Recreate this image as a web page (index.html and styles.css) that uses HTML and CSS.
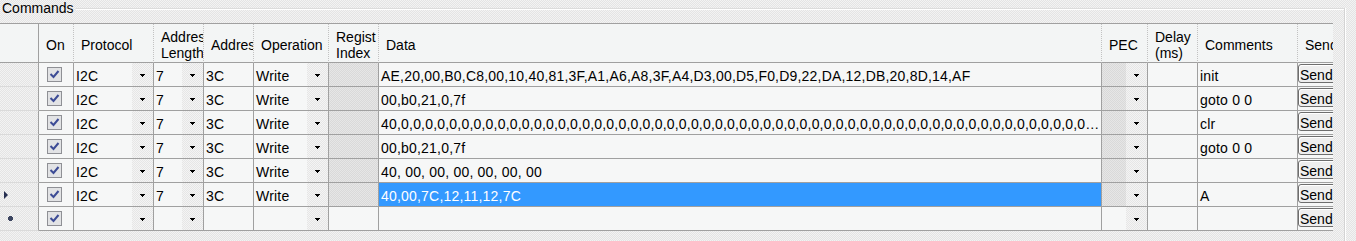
FILE: index.html
```html
<!DOCTYPE html>
<html lang="en">
<head>
    <meta charset="UTF-8">
    <meta name="viewport" content="width=device-width, initial-scale=1.0">
    <title>Commands</title>
    <link rel="stylesheet" href="styles.css">
</head>
<body>
<div class="groupbox">
    <div class="group-title">Commands</div>
    <div class="grid">
        <!-- header row -->
        <div class="hd corner"></div>
        <div class="hd">On</div>
        <div class="hd">Protocol</div>
        <div class="hd">Address<br>Length</div>
        <div class="hd">Address</div>
        <div class="hd">Operation</div>
        <div class="hd">Regist<br>Index</div>
        <div class="hd">Data</div>
        <div class="hd">PEC</div>
        <div class="hd">Delay<br>(ms)</div>
        <div class="hd">Comments</div>
        <div class="hd">Send</div>

        <!-- row 1 -->
        <div class="rh"></div>
        <div class="c chk"><svg class="cb" width="15" height="15" viewBox="0 0 15 15"><rect x="0.5" y="0.5" width="14" height="14" fill="#e2e3e5" stroke="#8f9095"/><path d="M3.5 7l3 3l5-6" fill="none" stroke="#3d4c96" stroke-width="2"/></svg></div>
        <div class="c"><span class="t">I2C</span><span class="dd"><svg width="5" height="3"><path d="M0 0h5v1h-5zM1 1h3v1h-3zM2 2h1v1h-1z"/></svg></span></div>
        <div class="c"><span class="t">7</span><span class="dd"><svg width="5" height="3"><path d="M0 0h5v1h-5zM1 1h3v1h-3zM2 2h1v1h-1z"/></svg></span></div>
        <div class="c"><span class="t">3C</span></div>
        <div class="c"><span class="t">Write</span><span class="dd"><svg width="5" height="3"><path d="M0 0h5v1h-5zM1 1h3v1h-3zM2 2h1v1h-1z"/></svg></span></div>
        <div class="c reg"></div>
        <div class="c"><span class="t">AE,20,00,B0,C8,00,10,40,81,3F,A1,A6,A8,3F,A4,D3,00,D5,F0,D9,22,DA,12,DB,20,8D,14,AF</span></div>
        <div class="c pec"><span class="t"></span><span class="dd"><svg width="5" height="3"><path d="M0 0h5v1h-5zM1 1h3v1h-3zM2 2h1v1h-1z"/></svg></span></div>
        <div class="c"><span class="t"></span></div>
        <div class="c"><span class="t">init</span></div>
        <div class="c send"><button class="send-btn">Send</button></div>

        <!-- row 2 -->
        <div class="rh"></div>
        <div class="c chk"><svg class="cb" width="15" height="15" viewBox="0 0 15 15"><rect x="0.5" y="0.5" width="14" height="14" fill="#e2e3e5" stroke="#8f9095"/><path d="M3.5 7l3 3l5-6" fill="none" stroke="#3d4c96" stroke-width="2"/></svg></div>
        <div class="c"><span class="t">I2C</span><span class="dd"><svg width="5" height="3"><path d="M0 0h5v1h-5zM1 1h3v1h-3zM2 2h1v1h-1z"/></svg></span></div>
        <div class="c"><span class="t">7</span><span class="dd"><svg width="5" height="3"><path d="M0 0h5v1h-5zM1 1h3v1h-3zM2 2h1v1h-1z"/></svg></span></div>
        <div class="c"><span class="t">3C</span></div>
        <div class="c"><span class="t">Write</span><span class="dd"><svg width="5" height="3"><path d="M0 0h5v1h-5zM1 1h3v1h-3zM2 2h1v1h-1z"/></svg></span></div>
        <div class="c reg"></div>
        <div class="c"><span class="t">00,b0,21,0,7f</span></div>
        <div class="c pec"><span class="t"></span><span class="dd"><svg width="5" height="3"><path d="M0 0h5v1h-5zM1 1h3v1h-3zM2 2h1v1h-1z"/></svg></span></div>
        <div class="c"><span class="t"></span></div>
        <div class="c"><span class="t">goto 0 0</span></div>
        <div class="c send"><button class="send-btn">Send</button></div>

        <!-- row 3 -->
        <div class="rh"></div>
        <div class="c chk"><svg class="cb" width="15" height="15" viewBox="0 0 15 15"><rect x="0.5" y="0.5" width="14" height="14" fill="#e2e3e5" stroke="#8f9095"/><path d="M3.5 7l3 3l5-6" fill="none" stroke="#3d4c96" stroke-width="2"/></svg></div>
        <div class="c"><span class="t">I2C</span><span class="dd"><svg width="5" height="3"><path d="M0 0h5v1h-5zM1 1h3v1h-3zM2 2h1v1h-1z"/></svg></span></div>
        <div class="c"><span class="t">7</span><span class="dd"><svg width="5" height="3"><path d="M0 0h5v1h-5zM1 1h3v1h-3zM2 2h1v1h-1z"/></svg></span></div>
        <div class="c"><span class="t">3C</span></div>
        <div class="c"><span class="t">Write</span><span class="dd"><svg width="5" height="3"><path d="M0 0h5v1h-5zM1 1h3v1h-3zM2 2h1v1h-1z"/></svg></span></div>
        <div class="c reg"></div>
        <div class="c"><span class="t">40,0,0,0,0,0,0,0,0,0,0,0,0,0,0,0,0,0,0,0,0,0,0,0,0,0,0,0,0,0,0,0,0,0,0,0,0,0,0,0,0,0,0,0,0,0,0,0,0,0,0,0,0,0,0,0,0,0,0,0,0,0,0,0,0,0,0,0,0,0,0,0,0,0,0,0,0,0,0,0,0,0,0,0,0,0,0,0,0,0,0,0,0,0,0,0,0,0,0,0,0,0,0,0,0,0,0,0,0,0,0,0,0,0,0,0,0,0,0,0,0,0,0,0,0,0,0,0,0</span></div>
        <div class="c pec"><span class="t"></span><span class="dd"><svg width="5" height="3"><path d="M0 0h5v1h-5zM1 1h3v1h-3zM2 2h1v1h-1z"/></svg></span></div>
        <div class="c"><span class="t"></span></div>
        <div class="c"><span class="t">clr</span></div>
        <div class="c send"><button class="send-btn">Send</button></div>

        <!-- row 4 -->
        <div class="rh"></div>
        <div class="c chk"><svg class="cb" width="15" height="15" viewBox="0 0 15 15"><rect x="0.5" y="0.5" width="14" height="14" fill="#e2e3e5" stroke="#8f9095"/><path d="M3.5 7l3 3l5-6" fill="none" stroke="#3d4c96" stroke-width="2"/></svg></div>
        <div class="c"><span class="t">I2C</span><span class="dd"><svg width="5" height="3"><path d="M0 0h5v1h-5zM1 1h3v1h-3zM2 2h1v1h-1z"/></svg></span></div>
        <div class="c"><span class="t">7</span><span class="dd"><svg width="5" height="3"><path d="M0 0h5v1h-5zM1 1h3v1h-3zM2 2h1v1h-1z"/></svg></span></div>
        <div class="c"><span class="t">3C</span></div>
        <div class="c"><span class="t">Write</span><span class="dd"><svg width="5" height="3"><path d="M0 0h5v1h-5zM1 1h3v1h-3zM2 2h1v1h-1z"/></svg></span></div>
        <div class="c reg"></div>
        <div class="c"><span class="t">00,b0,21,0,7f</span></div>
        <div class="c pec"><span class="t"></span><span class="dd"><svg width="5" height="3"><path d="M0 0h5v1h-5zM1 1h3v1h-3zM2 2h1v1h-1z"/></svg></span></div>
        <div class="c"><span class="t"></span></div>
        <div class="c"><span class="t">goto 0 0</span></div>
        <div class="c send"><button class="send-btn">Send</button></div>

        <!-- row 5 -->
        <div class="rh"></div>
        <div class="c chk"><svg class="cb" width="15" height="15" viewBox="0 0 15 15"><rect x="0.5" y="0.5" width="14" height="14" fill="#e2e3e5" stroke="#8f9095"/><path d="M3.5 7l3 3l5-6" fill="none" stroke="#3d4c96" stroke-width="2"/></svg></div>
        <div class="c"><span class="t">I2C</span><span class="dd"><svg width="5" height="3"><path d="M0 0h5v1h-5zM1 1h3v1h-3zM2 2h1v1h-1z"/></svg></span></div>
        <div class="c"><span class="t">7</span><span class="dd"><svg width="5" height="3"><path d="M0 0h5v1h-5zM1 1h3v1h-3zM2 2h1v1h-1z"/></svg></span></div>
        <div class="c"><span class="t">3C</span></div>
        <div class="c"><span class="t">Write</span><span class="dd"><svg width="5" height="3"><path d="M0 0h5v1h-5zM1 1h3v1h-3zM2 2h1v1h-1z"/></svg></span></div>
        <div class="c reg"></div>
        <div class="c"><span class="t">40, 00, 00, 00, 00, 00, 00</span></div>
        <div class="c pec"><span class="t"></span><span class="dd"><svg width="5" height="3"><path d="M0 0h5v1h-5zM1 1h3v1h-3zM2 2h1v1h-1z"/></svg></span></div>
        <div class="c"><span class="t"></span></div>
        <div class="c"><span class="t"></span></div>
        <div class="c send"><button class="send-btn">Send</button></div>

        <!-- row 6 (current) -->
        <div class="rh"><svg class="cur" width="4" height="8"><path d="M0 0L4 4L0 8z" fill="#262f50"/></svg></div>
        <div class="c chk"><svg class="cb" width="15" height="15" viewBox="0 0 15 15"><rect x="0.5" y="0.5" width="14" height="14" fill="#e2e3e5" stroke="#8f9095"/><path d="M3.5 7l3 3l5-6" fill="none" stroke="#3d4c96" stroke-width="2"/></svg></div>
        <div class="c"><span class="t">I2C</span><span class="dd"><svg width="5" height="3"><path d="M0 0h5v1h-5zM1 1h3v1h-3zM2 2h1v1h-1z"/></svg></span></div>
        <div class="c"><span class="t">7</span><span class="dd"><svg width="5" height="3"><path d="M0 0h5v1h-5zM1 1h3v1h-3zM2 2h1v1h-1z"/></svg></span></div>
        <div class="c"><span class="t">3C</span></div>
        <div class="c"><span class="t">Write</span><span class="dd"><svg width="5" height="3"><path d="M0 0h5v1h-5zM1 1h3v1h-3zM2 2h1v1h-1z"/></svg></span></div>
        <div class="c reg"></div>
        <div class="c sel"><span class="t">40,00,7C,12,11,12,7C</span></div>
        <div class="c pec"><span class="t"></span><span class="dd"><svg width="5" height="3"><path d="M0 0h5v1h-5zM1 1h3v1h-3zM2 2h1v1h-1z"/></svg></span></div>
        <div class="c"><span class="t"></span></div>
        <div class="c"><span class="t">A</span></div>
        <div class="c send"><button class="send-btn">Send</button></div>

        <!-- row 7 (new row) -->
        <div class="rh"><svg class="newrow" width="5" height="5"><path d="M1 0h3v1h1v3h-1v1h-3v-1h-1v-3h1z" fill="#3c4560"/></svg></div>
        <div class="c chk"><svg class="cb" width="15" height="15" viewBox="0 0 15 15"><rect x="0.5" y="0.5" width="14" height="14" fill="#e2e3e5" stroke="#8f9095"/><path d="M3.5 7l3 3l5-6" fill="none" stroke="#3d4c96" stroke-width="2"/></svg></div>
        <div class="c"><span class="t"></span><span class="dd"><svg width="5" height="3"><path d="M0 0h5v1h-5zM1 1h3v1h-3zM2 2h1v1h-1z"/></svg></span></div>
        <div class="c"><span class="t"></span><span class="dd"><svg width="5" height="3"><path d="M0 0h5v1h-5zM1 1h3v1h-3zM2 2h1v1h-1z"/></svg></span></div>
        <div class="c"><span class="t"></span></div>
        <div class="c"><span class="t"></span><span class="dd"><svg width="5" height="3"><path d="M0 0h5v1h-5zM1 1h3v1h-3zM2 2h1v1h-1z"/></svg></span></div>
        <div class="c"></div>
        <div class="c"><span class="t"></span></div>
        <div class="c"><span class="t"></span><span class="dd"><svg width="5" height="3"><path d="M0 0h5v1h-5zM1 1h3v1h-3zM2 2h1v1h-1z"/></svg></span></div>
        <div class="c"><span class="t"></span></div>
        <div class="c"><span class="t"></span></div>
        <div class="c send"><button class="send-btn">Send</button></div>
    </div>
</div>
</body>
</html>
```

FILE: styles.css
```css
body {
    margin: 0;
    height: 241px;
    overflow: hidden;
    font-family: "Liberation Sans", Arial, sans-serif;
    font-size: 14px;
    color: #000;
    background: repeating-conic-gradient(#e4e4e4 0 25%, #f3f3f3 0 50%) 0 0 / 2px 2px;
}

/* group box round the grid */
.groupbox {
    width: 1344px;
    height: 240px;
    margin-top: 8px;
    border-top: 1px solid #dcdcdc;
    border-right: 1px solid #d4d4d4;
    box-shadow: inset 0 1px 0 #fff, 1px 0 0 #fff;
}

.group-title {
    width: fit-content;
    height: 15px;
    margin-top: -9px;
    padding: 0 2px;
    line-height: 17px;
    background: repeating-conic-gradient(#e4e4e4 0 25%, #f3f3f3 0 50%) 0 0 / 2px 2px fixed;
}

.grid {
    width: 1333px;
    margin-top: 8px;
    overflow: hidden;
    display: grid;
    grid-template-columns: 39px 35px 80px 50px 50px 75px 50px 723px 46px 50px 100px 80px;
    grid-template-rows: 39px repeat(7, 24px);
    border-top: 1px solid #a0a0a0;
}

.grid > div {
    box-sizing: border-box;
    min-width: 0;
}

/* column headers */
.hd {
    display: flex;
    align-items: center;
    padding: 4px 0 0 7px;
    line-height: 16px;
    white-space: nowrap;
    overflow: hidden;
    background: #f3f5f5;
    border-right: 1px dotted #c2c2c2;
    border-bottom: 1px solid #a0a0a0;
}

.hd.corner {
    border-right: 1px solid #a0a0a0;
}

/* row headers */
.rh {
    display: flex;
    align-items: center;
    border-right: 1px solid #a0a0a0;
    border-bottom: 1px solid #dadada;
}

.rh .cur {
    margin-left: 4px;
}

.rh .newrow {
    margin-left: 8px;
}

/* body cells */
.c {
    display: flex;
    overflow: hidden;
    white-space: nowrap;
    background: #f6f7f7;
    border-right: 1px solid #a0a0a0;
    border-bottom: 1px solid #a0a0a0;
}

.t {
    flex: 1;
    min-width: 0;
    padding: 3px 0 0 2px;
    line-height: 20px;
    letter-spacing: 0.2px;
    overflow: hidden;
    text-overflow: ellipsis;
}

.chk {
    align-items: center;
    justify-content: center;
}

.cb {
    margin-right: 3px;
}

/* combo box drop button */
.dd {
    width: 21px;
    flex: none;
    display: flex;
    align-items: center;
    justify-content: center;
    background: repeating-conic-gradient(#e6e6e6 0 25%, #f4f4f4 0 50%) 0 0 / 2px 2px;
}

.dd svg {
    margin-top: 1px;
}

/* read only cells */
.reg,
.pec .t {
    background: repeating-conic-gradient(#d9d9d9 0 25%, #e6e6e6 0 50%) 0 0 / 2px 2px;
}

.sel .t {
    background: #3399ff;
    color: #fff;
}

.send {
    align-items: flex-start;
}

.send-btn {
    width: 60px;
    height: 19px;
    margin: 1px 0 0 0;
    padding: 2px 0 0 1px;
    box-sizing: border-box;
    font: inherit;
    line-height: 16px;
    color: #000;
    text-align: left;
    background: #eeeeee;
    border: 1px solid #6e6e6e;
    border-radius: 3px;
    box-shadow: inset 1px 1px 0 #fff;
}
```
